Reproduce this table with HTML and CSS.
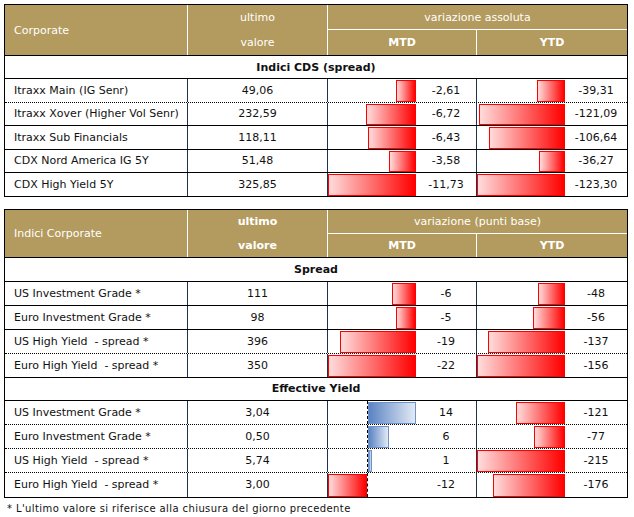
FILE: index.html
```html
<!DOCTYPE html>
<html lang="it">
<head>
<meta charset="utf-8">
<title>Corporate</title>
<link rel="stylesheet" href="styles.css">
</head>
<body>
<div class="page">

  <div class="tbl t1">
    <div class="head">
      <div class="h-name">Corporate</div>
      <div class="h-val"><span>ultimo</span><span>valore</span></div>
      <div class="h-var">
        <div class="h-title">variazione assoluta</div>
        <div class="h-sub"><span class="b">MTD</span><span class="b ytd">YTD</span></div>
      </div>
    </div>
    <div class="row sec">Indici CDS (spread)</div>
    <div class="row dot">
      <div class="c name">Itraxx Main (IG Senr)</div>
      <div class="c val">49,06</div>
      <div class="c bc"><div class="bars"><div class="bar red" style="width:19.6px"></div></div><div class="num">-2,61</div></div>
      <div class="c bc"><div class="bars"><div class="bar red" style="width:28.1px"></div></div><div class="num">-39,31</div></div>
    </div>
    <div class="row">
      <div class="c name">Itraxx Xover (Higher Vol Senr)</div>
      <div class="c val">232,59</div>
      <div class="c bc"><div class="bars"><div class="bar red" style="width:50.4px"></div></div><div class="num">-6,72</div></div>
      <div class="c bc"><div class="bars"><div class="bar red" style="width:86.4px"></div></div><div class="num">-121,09</div></div>
    </div>
    <div class="row">
      <div class="c name">Itraxx Sub Financials</div>
      <div class="c val">118,11</div>
      <div class="c bc"><div class="bars"><div class="bar red" style="width:48.2px"></div></div><div class="num">-6,43</div></div>
      <div class="c bc"><div class="bars"><div class="bar red" style="width:76.1px"></div></div><div class="num">-106,64</div></div>
    </div>
    <div class="row">
      <div class="c name">CDX Nord America IG 5Y</div>
      <div class="c val">51,48</div>
      <div class="c bc"><div class="bars"><div class="bar red" style="width:26.9px"></div></div><div class="num">-3,58</div></div>
      <div class="c bc"><div class="bars"><div class="bar red" style="width:25.9px"></div></div><div class="num">-36,27</div></div>
    </div>
    <div class="row">
      <div class="c name">CDX High Yield 5Y</div>
      <div class="c val">325,85</div>
      <div class="c bc"><div class="bars"><div class="bar red" style="width:88px"></div></div><div class="num">-11,73</div></div>
      <div class="c bc"><div class="bars"><div class="bar red" style="width:88px"></div></div><div class="num">-123,30</div></div>
    </div>
  </div>

  <div class="tbl t2">
    <div class="head">
      <div class="h-name">Indici Corporate</div>
      <div class="h-val b"><span>ultimo</span><span>valore</span></div>
      <div class="h-var">
        <div class="h-title">variazione (punti base)</div>
        <div class="h-sub"><span class="b">MTD</span><span class="b ytd">YTD</span></div>
      </div>
    </div>
    <div class="row sec">Spread</div>
    <div class="row">
      <div class="c name">US Investment Grade *</div>
      <div class="c val">111</div>
      <div class="c bc"><div class="bars"><div class="bar red" style="width:24px"></div></div><div class="num">-6</div></div>
      <div class="c bc"><div class="bars"><div class="bar red" style="width:27.1px"></div></div><div class="num">-48</div></div>
    </div>
    <div class="row">
      <div class="c name">Euro Investment Grade *</div>
      <div class="c val">98</div>
      <div class="c bc"><div class="bars"><div class="bar red" style="width:20px"></div></div><div class="num">-5</div></div>
      <div class="c bc"><div class="bars"><div class="bar red" style="width:31.6px"></div></div><div class="num">-56</div></div>
    </div>
    <div class="row dot">
      <div class="c name">US High Yield &nbsp;- spread *</div>
      <div class="c val">396</div>
      <div class="c bc"><div class="bars"><div class="bar red" style="width:76px"></div></div><div class="num">-19</div></div>
      <div class="c bc"><div class="bars"><div class="bar red" style="width:77.3px"></div></div><div class="num">-137</div></div>
    </div>
    <div class="row">
      <div class="c name">Euro High Yield &nbsp;- spread *</div>
      <div class="c val">350</div>
      <div class="c bc"><div class="bars"><div class="bar red" style="width:88px"></div></div><div class="num">-22</div></div>
      <div class="c bc"><div class="bars"><div class="bar red" style="width:88px"></div></div><div class="num">-156</div></div>
    </div>
    <div class="row sec">Effective Yield</div>
    <div class="row dot">
      <div class="c name">US Investment Grade *</div>
      <div class="c val">3,04</div>
      <div class="c bc"><div class="bars axis"><div class="neg"></div><div class="pos"><div class="bar blue" style="width:48px"></div></div></div><div class="num">14</div></div>
      <div class="c bc"><div class="bars"><div class="bar red" style="width:49.5px"></div></div><div class="num">-121</div></div>
    </div>
    <div class="row dot">
      <div class="c name">Euro Investment Grade *</div>
      <div class="c val">0,50</div>
      <div class="c bc"><div class="bars axis"><div class="neg"></div><div class="pos"><div class="bar blue" style="width:20.6px"></div></div></div><div class="num">6</div></div>
      <div class="c bc"><div class="bars"><div class="bar red" style="width:31.5px"></div></div><div class="num">-77</div></div>
    </div>
    <div class="row dot">
      <div class="c name">US High Yield &nbsp;- spread *</div>
      <div class="c val">5,74</div>
      <div class="c bc"><div class="bars axis"><div class="neg"></div><div class="pos"><div class="bar blue" style="width:4px"></div></div></div><div class="num">1</div></div>
      <div class="c bc"><div class="bars"><div class="bar red" style="width:88px"></div></div><div class="num">-215</div></div>
    </div>
    <div class="row">
      <div class="c name">Euro High Yield &nbsp;- spread *</div>
      <div class="c val">3,00</div>
      <div class="c bc"><div class="bars axis"><div class="neg"><div class="bar red" style="width:39px"></div></div><div class="pos"></div></div><div class="num">-12</div></div>
      <div class="c bc"><div class="bars"><div class="bar red" style="width:72px"></div></div><div class="num">-176</div></div>
    </div>
  </div>

  <p class="note">* L'ultimo valore si riferisce alla chiusura del giorno precedente</p>
</div>
</body>
</html>
```

FILE: styles.css
```css
* { box-sizing: border-box; }

html, body {
  margin: 0;
  padding: 0;
  background: #ffffff;
}

body {
  font-family: "DejaVu Sans", "Liberation Sans", sans-serif;
  font-size: 11px;
  color: #111111;
}

.page {
  padding: 4px 0 0 4px;
}

.tbl {
  width: 624px;
  border: 1px solid #000000;
  background: #ffffff;
}

.t2 {
  margin-top: 12px;
}

.head {
  display: grid;
  grid-template-columns: 182px 140px 300px;
  background: #b39a5e;
  color: #ffffff;
  border-bottom: 1px solid #000000;
}

.t1 .head { height: 51px; }
.t2 .head { height: 48px; }

.h-name {
  display: flex;
  align-items: center;
  padding-left: 9px;
}

.h-val {
  border-left: 1px solid #ffffff;
  display: grid;
  text-align: center;
}

.t1 .h-val { grid-template-rows: 24px 1fr; }
.t2 .h-val { grid-template-rows: 23px 1fr; }

.h-val span {
  display: flex;
  align-items: center;
  justify-content: center;
}

.h-var {
  border-left: 1px solid #ffffff;
  display: grid;
}

.t1 .h-var { grid-template-rows: 25px 1fr; }
.t2 .h-var { grid-template-rows: 24px 1fr; }

.h-title {
  display: flex;
  align-items: center;
  justify-content: center;
  border-bottom: 1px solid #ffffff;
}

.h-sub {
  display: grid;
  grid-template-columns: 148px 151px;
}

.h-sub span {
  display: flex;
  align-items: center;
  justify-content: center;
}

.h-sub .ytd {
  border-left: 1px solid #ffffff;
}

.b { font-weight: bold; }

.row {
  display: grid;
  grid-template-columns: 182px 140px 149px 151px;
  border-bottom: 1px solid #000000;
}

.t1 .row { height: 23.4px; }
.t2 .row { height: 23.85px; }

.row.dot { border-bottom: 1px dotted #000000; }
.row:last-child { border-bottom: none; }

.row.sec {
  display: flex;
  align-items: center;
  justify-content: center;
  font-weight: bold;
}

.c {
  display: flex;
  align-items: center;
  white-space: nowrap;
}

.c + .c {
  border-left: 1px solid #1d3350;
}

.name {
  padding-left: 9px;
}

.val {
  justify-content: center;
}

.bc {
  align-items: stretch;
}

.bars {
  width: 88px;
  flex: none;
  display: flex;
  justify-content: flex-end;
  padding-top: 1px;
}

.num {
  flex: 1;
  display: flex;
  align-items: center;
  justify-content: center;
}

.bar {
  height: 100%;
  border: 1px solid #ff0000;
}

.bar.red {
  background: linear-gradient(to right, #ffdcdc, #ff0000);
}

.bar.blue {
  border-color: #6f93c9;
  background: linear-gradient(to right, #5a84c4, #e2e9f4);
}

.axis {
  justify-content: flex-start;
  padding-top: 0;
}

.neg {
  width: 39px;
  display: flex;
  justify-content: flex-end;
  padding-top: 1px;
}

.pos {
  width: 49px;
  border-left: 1px dashed #000000;
  display: flex;
  justify-content: flex-start;
  padding-top: 1px;
}

.note {
  margin: 4px 0 0 0;
  padding-left: 3px;
  font-size: 10px;
  letter-spacing: 0.4px;
  line-height: 13px;
  color: #111111;
}
```
